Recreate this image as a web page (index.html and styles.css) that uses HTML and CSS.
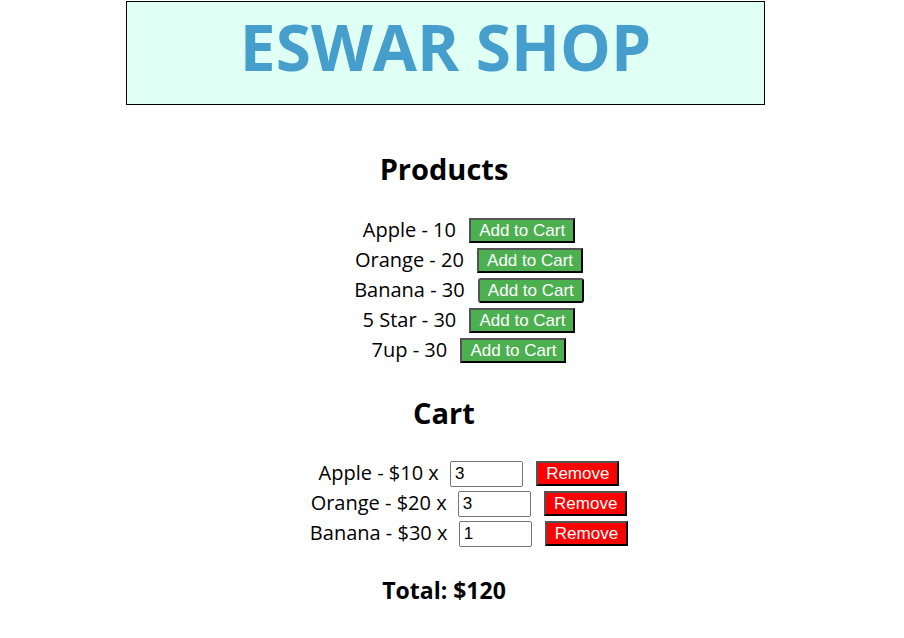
FILE: index.html
```html
<!DOCTYPE html>
<html>
<head>
<meta charset="utf-8">
<title>Eswar Shop</title>
<link rel="stylesheet" href="styles.css">
</head>
<body>
<div class="page">
  <header class="banner">
    <h1 class="brand">ESWAR SHOP</h1>
  </header>

  <section class="products">
    <h2 class="section-title">Products</h2>
    <ul class="list">
      <li class="row">Apple - 10 <button class="btn add">Add to Cart</button></li>
      <li class="row">Orange - 20 <button class="btn add">Add to Cart</button></li>
      <li class="row">Banana - 30 <button class="btn add hovered">Add to Cart</button></li>
      <li class="row">5 Star - 30 <button class="btn add">Add to Cart</button></li>
      <li class="row">7up - 30 <button class="btn add">Add to Cart</button></li>
    </ul>
  </section>

  <section class="cart">
    <h2 class="section-title cart-title">Cart</h2>
    <ul class="list cart-list">
      <li class="row">Apple - $10 x <input class="qty" type="number" value="3"> <button class="btn remove">Remove</button></li>
      <li class="row">Orange - $20 x <input class="qty" type="number" value="3"> <button class="btn remove">Remove</button></li>
      <li class="row">Banana - $30 x <input class="qty" type="number" value="1"> <button class="btn remove">Remove</button></li>
    </ul>
    <h3 class="total">Total: $120</h3>
  </section>
</div>
</body>
</html>
```

FILE: styles.css
```css
html, body {
  margin: 0;
  padding: 0;
  background: #ffffff;
}

body {
  font-family: "Open Sans", "Noto Sans", sans-serif;
  font-size: 20px;
  color: #000000;
}

.page {
  width: 872px;
  margin-left: 8px;
  text-align: center;
}

.banner {
  box-sizing: border-box;
  width: 639px;
  height: 104px;
  margin: 1px 0 0 118px;
  border: 1px solid #000000;
  background: #e0fff5;
}

.brand {
  margin: 0;
  font-size: 64px;
  font-weight: 700;
  line-height: 90px;
  color: #469ecd;
}

.section-title {
  margin: 44px 0 0;
  font-size: 29px;
  font-weight: 700;
  line-height: 40px;
}

.list {
  list-style: none;
  margin: 26px 0 0;
  padding: 0 0 0 60px;
}

.row {
  height: 30px;
  line-height: 30px;
}

.btn {
  font-family: "Liberation Sans", Arial, sans-serif;
  font-size: 17px;
  line-height: 20px;
  color: #ffffff;
  padding: 1px 8px 0;
  margin: 0 10px 0 8px;
  vertical-align: 1px;
}

.add {
  background-color: #4caf50;
}

.hovered {
  border-radius: 3px;
}

.remove {
  background-color: #ff0000;
}

.qty {
  box-sizing: border-box;
  width: 73px;
  height: 26px;
  margin-left: 6px;
  padding: 1px 3px;
  font-family: "Liberation Sans", Arial, sans-serif;
  font-size: 17px;
  vertical-align: 1px;
  -moz-appearance: textfield;
}

.qty::-webkit-outer-spin-button,
.qty::-webkit-inner-spin-button {
  -webkit-appearance: none;
  margin: 0;
}

.cart-title {
  margin-top: 28px;
}

.cart-list {
  margin-top: 25px;
}

.total {
  margin: 26px 0 0;
  font-size: 23px;
  font-weight: 700;
  line-height: 32px;
}
```
